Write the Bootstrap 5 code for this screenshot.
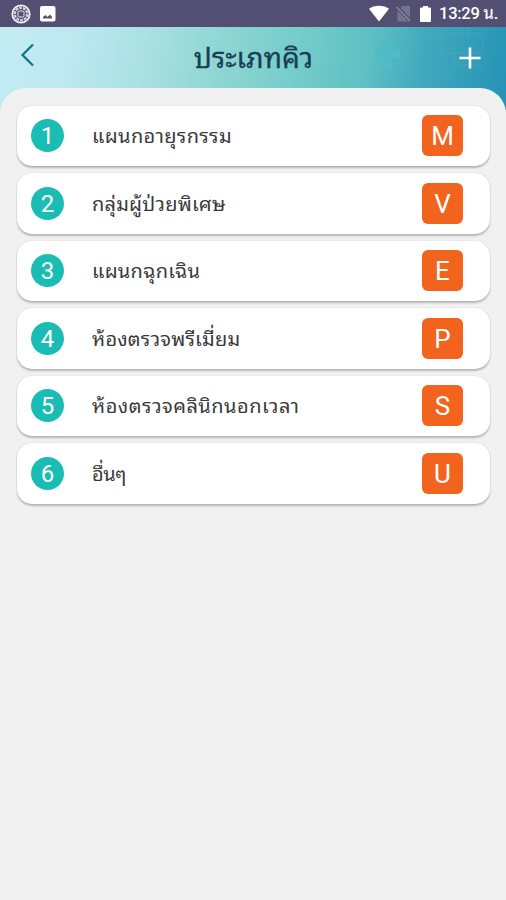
<!DOCTYPE html>
<html lang="th">
<head>
<meta charset="utf-8">
<meta name="viewport" content="width=device-width, initial-scale=1">
<title>ประเภทคิว</title>
<link href="https://cdn.jsdelivr.net/npm/bootstrap@5.3.0/dist/css/bootstrap.min.css" rel="stylesheet">
<style>
body{background:#f1f1f1;font-family:Roboto,"Noto Sans Thai Looped","Droid Sans Thai",Loma,Waree,"Noto Sans Thai","Noto Sans",sans-serif;min-height:900px;overflow:hidden}
.status{height:27px;background:#534f73;color:#fff;padding:0 9px 0 10px;font-size:16.5px;font-weight:500}
.status-time{line-height:29px;white-space:nowrap;width:58px;letter-spacing:-.25px}
.status-gap-sm{margin-left:7px}
.status-gap-md{margin-left:9px}
.hero{height:83px;background:linear-gradient(98deg,#c4ebf3 0%,#bce8ee 15%,#a9e0e2 29%,#8dd6d2 44%,#72cbc8 60%,#5ebfc4 72%,#41a9bd 83%,#2593b6 100%)}
.hero-art{left:0;top:0}
.hero-row{height:61px;padding:0 25px 0 20px}
.back{margin-top:-5px}
.title{font-size:28px;line-height:61px;color:#183f55;letter-spacing:.1px;padding-left:13px;padding-top:2px;-webkit-text-stroke:.3px #183f55}
.sheet{margin-top:-22px;background:#f1f1f1;border-radius:26px 26px 0 0;padding:17.5px 16px 0 17px}
.queue{gap:7px}
.queue-item{height:60.5px;border-radius:15px;padding:0 27px 0 14px;box-shadow:0 1.5px 2px rgba(0,0,0,.24),0 0 1.5px rgba(0,0,0,.1)}
.num{width:33px;height:33px;background:#1abdb3;font-size:24px;line-height:35px}
.label{margin-left:28px;padding-top:1px;font-size:20px;letter-spacing:.2px;color:#3a3a3a;white-space:nowrap}
.label-wide{letter-spacing:.48px}
.label-first{letter-spacing:.36px}
.label-tight{letter-spacing:-.5px}
.code{width:41px;height:41px;border-radius:6px;background:#f2641e;font-size:26px;line-height:43px}
</style>
<script src="https://cdn.jsdelivr.net/npm/bootstrap@5.3.0/dist/js/bootstrap.bundle.min.js"></script>
</head>
<body>
<div class="status d-flex align-items-center">
  <svg width="22" height="22" viewBox="0 0 22 22" fill="none" stroke="#f1f0f5"><circle cx="11" cy="11" r="8.7" stroke-width="1.8"/><circle cx="11" cy="11" r="6.2" stroke-width="2.400" stroke-dasharray="2.800 1" opacity=".8"/><rect x="8" y="8" width="6" height="6" rx="1.5" stroke-width="1"/></svg>
  <svg class="ms-2" width="16" height="16" viewBox="0 0 16 16"><rect width="15.5" height="15.5" rx="2" fill="#fff"/><path d="M3 12.500V11l2.500-2 2 2 2.500-2.500L12 11v1.500z" fill="#534f73"/></svg>
  <svg class="ms-auto" width="20" height="17" viewBox="0 0 20 17"><path d="M0 3.800C5-.4 15-.4 20 3.800L10 16.500z" fill="#fff"/></svg>
  <svg class="status-gap-sm" width="15" height="16" viewBox="0 0 15 16"><path d="M1.500 4.500 12.500 15.500H1.500zM4.500 2 6 0H14V12z" fill="#77738f"/><path d="M.5.8 14 15" stroke="#9492a9" stroke-width="1.2"/></svg>
  <svg class="status-gap-md" width="11" height="16" viewBox="0 0 11 16"><path d="M0 2.500q0-1 1-1H3V0H8V1.500H10q1 0 1 1V15q0 1-1 1H1q-1 0-1-1z" fill="#fff"/></svg>
  <span class="status-time ms-2">13:29 น.</span>
</div>
<header class="hero position-relative">
  <svg class="hero-art position-absolute" width="506" height="83" viewBox="0 0 506 83"><path d="M383 13h9v9h8v9h-8v10h-9V31h-8v-9h8z" fill="#4ebdc7"/><path d="M425 10H440V7H483V26H454V38H483M469 0V11M440 10V26H454" fill="none" stroke="#64c8d5" stroke-opacity=".2"/></svg>
  <div class="hero-row d-flex justify-content-between align-items-center position-relative">
    <svg class="back" width="15" height="24" viewBox="0 0 15 24" fill="none" stroke="#14718b" stroke-width="2.200"><path d="M13 1.500 2.500 12 13 22.500"/></svg>
    <h1 class="title m-0 fw-normal">ประเภทคิว</h1>
    <svg width="22" height="22" viewBox="0 0 22 22" stroke="#fff" stroke-width="2.600"><path d="M.5 11H21.500M11 .5V21.500"/></svg>
  </div>
</header>
<main class="sheet position-relative">
  <div class="queue d-flex flex-column">
    <div class="queue-item bg-white d-flex align-items-center"><span class="num rounded-circle text-white text-center">1</span><span class="label label-first">แผนกอายุรกรรม</span><span class="code ms-auto text-white text-center">M</span></div>
    <div class="queue-item bg-white d-flex align-items-center"><span class="num rounded-circle text-white text-center">2</span><span class="label">กลุ่มผู้ป่วยพิเศษ</span><span class="code ms-auto text-white text-center">V</span></div>
    <div class="queue-item bg-white d-flex align-items-center"><span class="num rounded-circle text-white text-center">3</span><span class="label">แผนกฉุกเฉิน</span><span class="code ms-auto text-white text-center">E</span></div>
    <div class="queue-item bg-white d-flex align-items-center"><span class="num rounded-circle text-white text-center">4</span><span class="label">ห้องตรวจพรีเมี่ยม</span><span class="code ms-auto text-white text-center">P</span></div>
    <div class="queue-item bg-white d-flex align-items-center"><span class="num rounded-circle text-white text-center">5</span><span class="label label-wide">ห้องตรวจคลินิกนอกเวลา</span><span class="code ms-auto text-white text-center">S</span></div>
    <div class="queue-item bg-white d-flex align-items-center"><span class="num rounded-circle text-white text-center">6</span><span class="label label-tight">อื่นๆ</span><span class="code ms-auto text-white text-center">U</span></div>
  </div>
</main>
</body>
</html>
